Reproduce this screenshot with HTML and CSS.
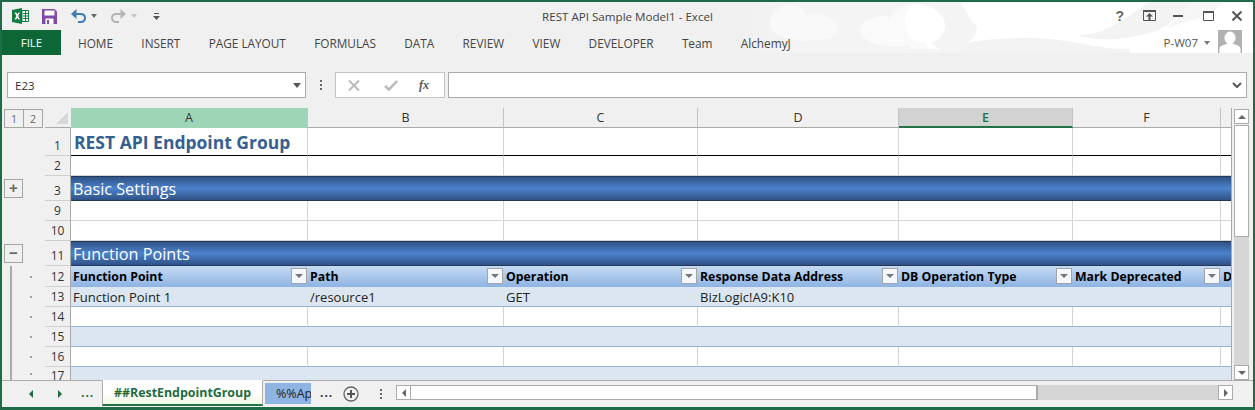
FILE: index.html
```html
<!DOCTYPE html>
<html lang="en">
<head>
<meta charset="utf-8">
<title>REST API Sample Model1 - Excel</title>
<link rel="stylesheet" href="styles.css">
</head>
<body>
<div class="window">
  <header class="chrome">
    <svg class="clouds" width="1251" height="51" viewBox="2 2 1251 51">
      <defs><linearGradient id="fade"><stop offset="0" stop-color="#f0f0f0"/><stop offset=".1" stop-color="#f4f4f4"/><stop offset="1" stop-color="#f4f4f4"/></linearGradient></defs>
      <path fill="url(#fade)" d="M740 2h513v51H740z"/>
      <path fill="#f9f9f9" d="M770 28c-2-10 6-22 20-23 8 0 14 4 16 10 6-3 14-2 22 2 8 3 12 10 10 16-4 6-14 6-22 7-16 3-36 0-46-12z"/>
      <path fill="#fafafa" d="M860 30c0-7 8-12 16-12 5-3 10-3 13 1 4-8 14-15 26-15 16 0 30 10 30 22 0 8-6 14-14 17l8 6h-30l2-4c-16 2-30 2-40-3-7-3-11-7-11-12z"/>
      <path fill="#fff" d="M912 5c16-3 33 8 33 21 0 8-6 14-14 17l8 6h-10l-4-7c-8 0-14-2-17-8-4-10-4-22 4-29z"/>
      <path fill="#fff" d="M960 2h293v51H960l7-10c6-4 9-8 10-14 1-5-8-8-9-14-1-4-5-8-8-13z"/>
      <path fill="#f3f3f3" d="M960 53l7-10c24-5 60-7 92-3 26 4 44 9 70 9l1 4z"/>
      <path fill="#f3f3f3" d="M1077 35c28 1 48-17 73-33h42c-4 6-10 12-18 18-6 5-12 9-22 12-26 8-52 10-75 3z"/>
      <path fill="#f6f6f6" d="M1192 2h30c-6 8-14 14-30 18-10 3-18 6-26 8 8-6 20-16 26-26z"/>
    </svg>
    <div class="titlebar">
      <div class="qat">
        <svg class="ico-xl" width="17" height="16" viewBox="0 0 17 16"><path fill="#107c41" d="M0 2l10-2v16L0 14z"/><path fill="#fff" d="M2.600 4.500h1.700l1 2 1-2H8L6.200 8 8 11.500H6.300l-1-2-1 2H2.600L4.400 8z"/><path fill="#fff" stroke="#107c41" d="M10 2.500h6.500v11H10z"/><path stroke="#107c41" d="M11 5.500h5M11 8h5M11 10.500h5M13.500 3v10"/></svg>
        <svg class="ico-save" width="15" height="15" viewBox="0 0 15 15"><path fill="#7f4aa5" d="M0 0h12.500L15 2.500V15H0z"/><path fill="#fff" d="M2.500 1.500h10v5h-10zM3.500 9.500h8V15h-8z"/><path fill="#7f4aa5" d="M5 11h2v4H5z"/></svg>
        <svg class="ico-undo" width="15" height="14" viewBox="0 0 15 14"><path fill="none" stroke="#3f7cb8" stroke-width="2" d="M3 5h6.500c3 0 4.500 1.800 4.500 4s-1.500 4-4.500 4H7"/><path fill="#3f7cb8" d="M5.500 0v10L0 5z"/></svg>
        <i class="caret c-dark"></i>
        <svg class="ico-redo" width="15" height="14" viewBox="0 0 15 14"><path fill="none" stroke="#b4b4b4" stroke-width="2" d="M12 5H5.500C2.500 5 1 6.800 1 9s1.500 4 4.500 4H8"/><path fill="#b4b4b4" d="M9.500 0v10L15 5z"/></svg>
        <i class="caret c-light"></i>
        <svg class="ico-more" width="7" height="7" viewBox="0 0 7 7"><path fill="#555" d="M1 0h5v1H1zM0 3h7L3.500 7z"/></svg>
      </div>
      <div class="doc-title">REST API Sample Model1 - Excel</div>
      <div class="win-controls">
        <span class="help">?</span>
        <svg width="13" height="11" viewBox="0 0 13 11"><path fill="none" stroke="#555" d="M.5.500h12v10H.5z"/><path fill="#555" d="M0 0h13v2H0zM6.500 3L10 6.500H7.500V10h-2V6.500H3z"/></svg>
        <svg class="win-min" width="10" height="2" viewBox="0 0 10 2"><path fill="#555" d="M0 0h10v2H0z"/></svg>
        <svg class="win-max" width="11" height="10" viewBox="0 0 11 10"><path fill="none" stroke="#555" d="M.5.500h10v9H.5z"/><path fill="#555" d="M0 0h11v2H0z"/></svg>
        <svg class="win-close" width="10" height="10" viewBox="0 0 10 10"><path stroke="#555" stroke-width="2" d="M.5.500l9 9M9.500.500l-9 9"/></svg>
      </div>
    </div>
    <nav class="ribbon">
      <a class="file-tab">FILE</a>
      <div class="tabs">
        <a>HOME</a><a>INSERT</a><a>PAGE LAYOUT</a><a>FORMULAS</a><a>DATA</a><a>REVIEW</a><a>VIEW</a><a>DEVELOPER</a><a>Team</a><a>AlchemyJ</a>
      </div>
      <div class="account">
        <span class="user">P-W07</span>
        <i class="caret c-mid"></i>
        <svg class="avatar" width="24" height="23" viewBox="0 0 24 23"><path fill="#b1b1b1" d="M0 0h24v23H0z"/><ellipse fill="#fff" cx="12" cy="8" rx="5.500" ry="6.500"/><path fill="#fff" d="M1.500 23v-4c0-3 4-4 7-5h7c3 1 7 2 7 5v4z"/></svg>
      </div>
    </nav>
  </header>

  <section class="formula-bar">
    <div class="name-box"><span>E23</span><i class="caret c-box"></i></div>
    <div class="grip"><b></b><b></b><b></b></div>
    <div class="fx-box">
      <svg width="12" height="11" viewBox="0 0 12 11"><path stroke="#b9b9b9" stroke-width="2" d="M1 .5l10 10M11 .5l-10 10"/></svg>
      <svg width="14" height="11" viewBox="0 0 14 11"><path fill="none" stroke="#b9b9b9" stroke-width="2.500" d="M1 6l4 3.500L13 1"/></svg>
      <em>fx</em>
    </div>
    <div class="fx-input">
      <svg width="10" height="6" viewBox="0 0 10 6"><path fill="none" stroke="#555" stroke-width="2" d="M1 1l4 4 4-4"/></svg>
    </div>
  </section>

  <main class="sheet-wrap">
    <div class="sheet">
      <div class="row head-row">
        <div class="gutter levels"><span>1</span><span>2</span></div>
        <div class="rh corner"><i></i></div>
        <div class="ch sel-a">A</div><div class="ch">B</div><div class="ch">C</div><div class="ch">D</div><div class="ch sel-e">E</div><div class="ch">F</div><div class="ch"></div>
      </div>
      <div class="row r1 plain">
        <div class="gutter"></div><div class="rh">1</div>
        <div class="c title-cell">REST API Endpoint Group</div><div class="c"></div><div class="c"></div><div class="c"></div><div class="c"></div><div class="c"></div><div class="c"></div>
      </div>
      <div class="row r20 plain">
        <div class="gutter"></div><div class="rh">2</div>
        <div class="c"></div><div class="c"></div><div class="c"></div><div class="c"></div><div class="c"></div><div class="c"></div><div class="c"></div>
      </div>
      <div class="row band h25">
        <div class="gutter"><span class="toggle">+</span></div><div class="rh">3</div>
        <div class="band-text">Basic Settings</div>
      </div>
      <div class="row r20 plain">
        <div class="gutter"></div><div class="rh">9</div>
        <div class="c"></div><div class="c"></div><div class="c"></div><div class="c"></div><div class="c"></div><div class="c"></div><div class="c"></div>
      </div>
      <div class="row r20 plain">
        <div class="gutter"></div><div class="rh">10</div>
        <div class="c"></div><div class="c"></div><div class="c"></div><div class="c"></div><div class="c"></div><div class="c"></div><div class="c"></div>
      </div>
      <div class="row band h25">
        <div class="gutter"><span class="toggle minus">&#8722;</span></div><div class="rh">11</div>
        <div class="band-text">Function Points</div>
      </div>
      <div class="row thead">
        <div class="gutter outlined"><u></u></div><div class="rh">12</div>
        <div class="th">Function Point<i class="filter"></i></div>
        <div class="th">Path<i class="filter"></i></div>
        <div class="th">Operation<i class="filter"></i></div>
        <div class="th">Response Data Address<i class="filter"></i></div>
        <div class="th">DB Operation Type<i class="filter"></i></div>
        <div class="th">Mark Deprecated<i class="filter"></i></div>
        <div class="th clip">D</div>
      </div>
      <div class="row r20 stripe">
        <div class="gutter outlined"><u></u></div><div class="rh">13</div>
        <div class="td">Function Point 1</div><div class="td">/resource1</div><div class="td">GET</div><div class="td">BizLogic!A9:K10</div><div class="td"></div><div class="td"></div><div class="td"></div>
      </div>
      <div class="row r20 blank">
        <div class="gutter outlined"><u></u></div><div class="rh">14</div>
        <div class="td"></div><div class="td"></div><div class="td"></div><div class="td"></div><div class="td"></div><div class="td"></div><div class="td"></div>
      </div>
      <div class="row r20 stripe">
        <div class="gutter outlined"><u></u></div><div class="rh">15</div>
        <div class="td"></div><div class="td"></div><div class="td"></div><div class="td"></div><div class="td"></div><div class="td"></div><div class="td"></div>
      </div>
      <div class="row r20 blank">
        <div class="gutter outlined"><u></u></div><div class="rh">16</div>
        <div class="td"></div><div class="td"></div><div class="td"></div><div class="td"></div><div class="td"></div><div class="td"></div><div class="td"></div>
      </div>
      <div class="row r12 stripe last">
        <div class="gutter outlined"><u></u></div><div class="rh">17</div>
        <div class="td"></div><div class="td"></div><div class="td"></div><div class="td"></div><div class="td"></div><div class="td"></div><div class="td"></div>
      </div>
    </div>
    <div class="vscroll">
      <span class="sbtn"><i class="tri up"></i></span>
      <span class="vthumb"></span>
      <span class="vtrack"></span>
      <span class="sbtn"><i class="tri down"></i></span>
    </div>
  </main>

  <footer class="statusbar">
    <div class="nav-arrows">
      <i class="tri left green"></i><i class="tri right green"></i><span class="dots green-text">...</span>
    </div>
    <div class="tab-active">##RestEndpointGroup</div>
    <div class="tab-next">%%Ap</div>
    <span class="dots more">...</span>
    <svg class="add" width="16" height="16" viewBox="0 0 16 16"><circle cx="8" cy="8" r="7" fill="none" stroke="#666" stroke-width="1.300"/><path stroke="#555" stroke-width="2" d="M8 4v8M4 8h8"/></svg>
    <div class="grip small"><b></b><b></b><b></b></div>
    <div class="hscroll">
      <span class="sbtn"><i class="tri left"></i></span>
      <span class="hthumb"></span>
      <span class="htrack"></span>
      <span class="sbtn"><i class="tri right"></i></span>
    </div>
  </footer>
</div>
</body>
</html>
```
FILE: styles.css
```css
* { box-sizing: border-box; }
html, body { margin: 0; height: 100%; }
body { background: #f0f0f0; font-family: "Open Sans", "Liberation Sans", sans-serif; overflow: hidden; }
.window { width: 1255px; height: 410px; display: flex; flex-direction: column; background: #f0f0f0; border: 2px solid #1e6b47; border-width: 2px 2px 3px 2px; overflow: hidden; }

.chrome { position: relative; height: 51px; flex: none; }
.clouds { position: absolute; left: 0; top: 0; }
.titlebar { position: relative; height: 28px; display: grid; grid-template-columns: 1fr auto 1fr; align-items: center; }
.qat { display: flex; align-items: center; padding-left: 10px; }
.ico-xl { margin-top: -1px; }
.ico-save { margin-left: 13px; }
.ico-undo { margin-left: 14px; }
.ico-redo { margin-left: 14px; }
.ico-more { margin-left: 16px; }
.caret { display: inline-block; width: 0; height: 0; border-left: 3.500px solid transparent; border-right: 3.500px solid transparent; border-top: 4px solid #666; }
.c-dark { margin-left: 5px; border-top-color: #666; }
.c-light { margin-left: 5px; border-top-color: #c4c4c4; }
.c-mid { margin: 0 5px 0 6px; border-top-color: #777; }
.c-box { border-left-width: 4px; border-right-width: 4px; border-top-width: 5px; border-top-color: #555; }
.doc-title { font-size: 11.600px; color: #444; padding-top: 1px; }
.win-controls { display: flex; justify-content: flex-end; align-items: center; padding-right: 11px; margin-top: -1px; }
.help { font: bold 14px "Liberation Sans", sans-serif; color: #666; margin-right: 19px; }
.win-min { margin-left: 17px; margin-top: 1px; }
.win-max { margin-left: 20px; }
.win-close { margin-left: 18px; }

.ribbon { position: relative; height: 25px; display: flex; align-items: center; }
.file-tab { width: 59px; height: 25px; background: #0c6636; color: #fff; font-size: 11.500px; display: flex; align-items: center; justify-content: center; }
.tabs { display: flex; gap: 28.300px; padding-left: 17px; font-size: 11.800px; color: #444; white-space: nowrap; }
.account { margin-left: auto; display: flex; align-items: center; padding-right: 11px; height: 25px; }
.user { font-size: 11.500px; color: #555; }
.avatar { margin-left: 3px; align-self: flex-start; margin-top: 0; }

.formula-bar { flex: none; height: 55px; padding: 19px 6px 10px 5px; display: flex; align-items: stretch; }
.name-box { width: 299px; background: #fff; border: 1px solid #ababab; display: flex; align-items: center; justify-content: space-between; padding: 0 4px 0 7px; font-size: 11.500px; color: #333; }
.grip { display: flex; flex-direction: column; justify-content: center; gap: 2px; width: 29px; align-items: center; }
.grip b { width: 2px; height: 2px; background: #666; }
.fx-box { width: 110px; background: #fff; border: 1px solid #c4c4c4; display: flex; align-items: center; padding-left: 12px; }
.fx-box svg + svg { margin-left: 24px; }
.fx-box em { font: italic bold 12px "Liberation Serif", serif; color: #555; margin-left: 21px; }
.fx-input { flex: 1; margin-left: 3px; background: #fff; border: 1px solid #ababab; display: flex; align-items: center; justify-content: flex-end; padding-right: 4px; }

.sheet-wrap { flex: none; height: 272px; display: flex; }
.sheet { width: 1230px; flex: none; display: flex; flex-direction: column; overflow: hidden; border-right: 1px solid #a9a9a9; }
.row { display: grid; grid-template-columns: 43px 26px 237px 196px 194px 201px 174px 148px 11px; grid-template-rows: minmax(0, 1fr); flex: none; }
.head-row { height: 20px; font-size: 12.500px; color: #333; }
.r1 { height: 28px; }
.r20 { height: 20px; }
.r12 { height: 13px; }
.h25 { height: 25px; }
.thead { height: 21px; }
.gutter { display: flex; align-items: center; justify-content: center; position: relative; }
.levels { justify-content: flex-start; padding-left: 2px; padding-top: 1px; align-items: flex-start; }
.levels span { width: 20px; height: 19px; border: 1px solid #a5a5a5; font-size: 10.500px; color: #666; display: flex; align-items: center; justify-content: center; background: #f0f0f0; margin-right: -1px; }
.corner { position: relative; }
.corner i { position: absolute; right: 3px; bottom: 3px; width: 0; height: 0; border-left: 12px solid transparent; border-bottom: 12px solid #d8d8d8; }
.rh { border-bottom: 1px solid #cfcfcf; border-right: 1px solid #a9a9a9; font-size: 12px; color: #333; display: flex; align-items: flex-end; justify-content: center; padding: 0 0 1px 0; line-height: 16px; }
.head-row .rh { border-bottom-color: #a9a9a9; border-right: 0; }
.last .rh { align-items: flex-start; overflow: hidden; border-bottom: 0; padding: 1px 0 0; }
.ch { border-right: 1px solid #c4c4c4; border-bottom: 1px solid #a9a9a9; display: flex; align-items: center; justify-content: center; }
.sel-a { background: #9fd5b7; border-bottom-color: #9fd5b7; color: #333; }
.sel-e { background: #d2d2d2; color: #217346; font-weight: 600; border-bottom: 2px solid #217346; }
.c { background: #fff; border-right: 1px solid #d4d4d4; border-bottom: 1px solid #d4d4d4; }
.r1 .c { border-bottom: 1px solid #000; }
.title-cell { color: #355f91; font-size: 17.500px; font-weight: 700; padding: 1px 0 0 3px; line-height: 26px; white-space: nowrap; }
.band .band-text { grid-column: 3 / -1; background: linear-gradient(#2f5285, #4c82cd 50%, #2f5285); border-top: 1px solid #23395b; border-bottom: 1px solid #23395b; color: #fff; font-size: 16.200px; padding-left: 2px; display: flex; align-items: center; }
.toggle { width: 19px; height: 19px; border: 1px solid #a5a5a5; position: absolute; left: 2px; top: 3px; font: bold 15px/16px "Liberation Sans", sans-serif; color: #666; text-align: center; background: #f0f0f0; z-index: 1; }
.outlined::before { content: ""; width: 2px; height: 2px; background: #a0a0a0; margin-left: 15px; }
.outlined u { position: absolute; left: 8px; top: 0; bottom: 0; width: 2px; background: #a9a9a9; }
.th { background: linear-gradient(#c6daf2, #8eb4e3); font-size: 12.300px; font-weight: 700; color: #000; padding-left: 2px; display: flex; align-items: center; position: relative; white-space: nowrap; overflow: hidden; }
.filter { position: absolute; right: 1px; top: 2px; width: 16px; height: 16px; background: #f4f7fb; border: 1px solid #a5a5a5; }
.filter::after { content: ""; position: absolute; left: 3px; top: 5px; border-left: 4px solid transparent; border-right: 4px solid transparent; border-top: 4px solid #777; }
.td { font-size: 13px; color: #222; padding-left: 2px; display: flex; align-items: center; border-bottom: 1px solid #95b3d7; white-space: nowrap; }
.stripe .td { background: #dce6f1; }
.blank .td { background: #fff; border-right: 1px solid #d4d4d4; }
.last .td { border-bottom: 0; }

.vscroll { width: 15px; margin-left: 2px; display: flex; flex-direction: column; padding-top: 1px; }
.sbtn { flex: none; width: 15px; height: 15px; background: #fff; border: 1px solid #ababab; display: flex; align-items: center; justify-content: center; }
.vthumb { height: 112px; margin-top: 1px; background: #fff; border: 1px solid #ababab; flex: none; }
.vtrack { flex: 1; background: #d6d6d6; }
.tri { display: inline-block; width: 0; height: 0; }
.tri.up { border-left: 4px solid transparent; border-right: 4px solid transparent; border-bottom: 4px solid #666; }
.tri.down { border-left: 4px solid transparent; border-right: 4px solid transparent; border-top: 4px solid #666; }
.tri.left { border-top: 4px solid transparent; border-bottom: 4px solid transparent; border-right: 4px solid #666; }
.tri.right { border-top: 4px solid transparent; border-bottom: 4px solid transparent; border-left: 4px solid #666; }
.tri.left.green { border-right-color: #1e6b3c; }
.tri.right.green { border-left-color: #1e6b3c; }

.statusbar { flex: 1; display: flex; align-items: stretch; border-top: 1px solid #ababab; position: relative; min-height: 0; }
.nav-arrows { width: 100px; flex: none; display: flex; align-items: center; padding-left: 27px; gap: 25px; }
.dots { font-weight: 700; font-size: 12px; letter-spacing: 1px; padding-bottom: 3px; }
.green-text { color: #1e6b3c; margin-left: -6px; }
.tab-active { width: 161px; flex: none; height: 26px; margin-top: -1px; background: linear-gradient(#fff 50%, #eff8e0); border: 1px solid #ababab; border-top-color: #fff; border-bottom: 2px solid #217346; color: #1e6b3c; font-weight: 700; font-size: 12.400px; display: flex; align-items: center; justify-content: center; }
.tab-next { width: 46px; flex: none; height: 21px; margin: 2px 0 0 2px; background: #8db4e2; color: #222; font-size: 12.500px; padding-left: 11px; display: flex; align-items: center; overflow: hidden; white-space: nowrap; }
.more { margin-left: 9px; width: 20px; align-self: center; color: #333; }
.add { margin-left: 3px; align-self: center; }
.grip.small { width: 21px; margin-left: 11px; }
.hscroll { width: 837px; height: 15px; margin: 4px 0 0 5px; display: flex; }
.hthumb { width: 627px; background: #fff; border: 1px solid #ababab; border-left: 0; border-right-width: 2px; }
.htrack { flex: 1; background: #d6d6d6; }
```
